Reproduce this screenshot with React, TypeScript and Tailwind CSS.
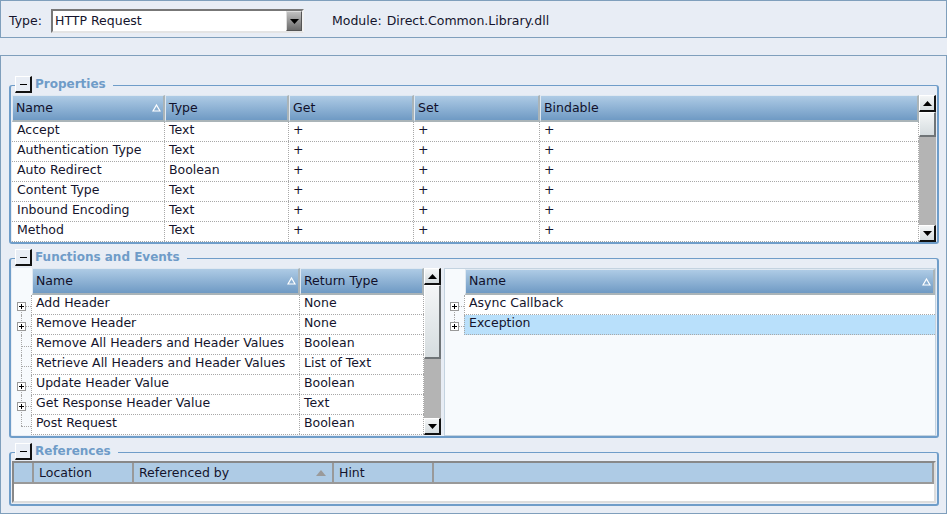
const properties = [
  ["Accept", "Text"],
  ["Authentication Type", "Text"],
  ["Auto Redirect", "Boolean"],
  ["Content Type", "Text"],
  ["Inbound Encoding", "Text"],
  ["Method", "Text"],
];

const functions = [
  { name: "Add Header", type: "None", plus: true },
  { name: "Remove Header", type: "None", plus: true },
  { name: "Remove All Headers and Header Values", type: "Boolean", plus: false },
  { name: "Retrieve All Headers and Header Values", type: "List of Text", plus: false },
  { name: "Update Header Value", type: "Boolean", plus: true },
  { name: "Get Response Header Value", type: "Text", plus: true },
  { name: "Post Request", type: "Boolean", plus: false },
];

const SortUp = () => (
  <svg width="9" height="8" viewBox="0 0 9 8" className="shrink-0">
    <path d="M4.5 1 L8 7 L1 7 Z" fill="none" stroke="#fff" strokeWidth="1.2" />
  </svg>
);

const Header = ({ label, width, sort, height }: { label: string; width?: string; sort?: boolean; height?: string }) => (
  <div
    className={`flex items-center justify-between border-t border-l border-[#dfe8f1] border-b-2 border-b-[#aab4b8] border-r-2 border-r-[#aab4b8] bg-linear-to-b from-[#aecbe5] to-[#6f9ac4] pl-[3px] pr-[2px] text-[#10102a] ${height ?? "h-[27px]"} ${width ?? "flex-1"}`}
  >
    <span>{label}</span>
    {sort && <SortUp />}
  </div>
);

const Cell = ({ children, width }: { children: string; width?: string }) => (
  <div className={`h-full truncate border-r border-dotted border-[#a8a8a8] pl-[4px] leading-[16px] ${width ?? "flex-1"}`}>
    {children}
  </div>
);

const Arrow = ({ down }: { down?: boolean }) => (
  <svg width="9" height="5" viewBox="0 0 9 5">
    <path d={down ? "M0 0 H9 L4.5 5 Z" : "M4.5 0 L9 5 H0 Z"} fill="#000" />
  </svg>
);

const ScrollBar = ({ thumb }: { thumb: string }) => {
  const btn =
    "flex h-[17px] shrink-0 items-center justify-center border-t border-l border-white border-r-2 border-b-2 border-r-[#111] border-b-[#111] bg-linear-to-b from-[#f4f6f7] to-[#d5dcdf]";
  return (
    <div className="flex h-full w-[17px] shrink-0 flex-col bg-[#b4b4b4]">
      <div className={btn}>
        <Arrow />
      </div>
      <div className={`${thumb} shrink-0 border-r-2 border-b-2 border-r-[#6f7477] border-b-[#6f7477] border-t border-l border-white bg-linear-to-b from-[#f4f6f7] to-[#d5dcdf]`} />
      <div className="flex-1" />
      <div className={btn}>
        <Arrow down />
      </div>
    </div>
  );
};

const Collapse = () => (
  <div className="flex h-[17px] w-[17px] items-center justify-center border-t border-l border-white border-r-2 border-b-2 border-r-[#111] border-b-[#111] bg-[#e8edf5]">
    <div className="h-px w-[7px] bg-black" />
  </div>
);

const Group = ({ title, className, children }: { title: string; className: string; children: React.ReactNode }) => (
  <div className={`relative rounded-[3px] border-x-2 border-t border-b-2 border-[#6f9dc9] ${className}`}>
    <div className="absolute top-[-10px] left-[4px] flex h-[17px] items-start gap-[3px] bg-[#e8edf5] pr-[7px]">
      <Collapse />
      <span className="text-[12px] leading-[17px] font-bold text-[#6f9cc8]">{title}</span>
    </div>
    {children}
  </div>
);

const Plus = () => (
  <div className="relative z-10 flex h-[9px] w-[9px] items-center justify-center border border-[#999] bg-white">
    <div className="absolute h-px w-[5px] bg-black" />
    <div className="absolute h-[5px] w-px bg-black" />
  </div>
);

const Tree = ({ plus, last, first }: { plus: boolean; last?: boolean; first?: boolean }) => (
  <div className="relative h-full w-[19px] shrink-0">
    <div className={`absolute left-[9px] border-l border-dotted border-[#a8a8a8] ${first ? "top-[11px] bottom-0" : last ? "top-0 h-[11px]" : "inset-y-0"}`} />
    <div className="absolute top-[11px] left-[9px] w-[10px] border-t border-dotted border-[#a8a8a8]" />
    {plus && (
      <div className="absolute top-[7px] left-[5px]">
        <Plus />
      </div>
    )}
  </div>
);

export default function App() {
  return (
    <div className="flex h-[514px] w-[947px] flex-col overflow-hidden bg-[#e8edf5] font-['DejaVu_Sans',sans-serif] text-[12.5px] text-[#14142c]">
      <div className="flex h-[38px] shrink-0 items-center border border-[#7f9fbc] pt-[4px] pl-[8px]">
        <span className="w-[42px]">Type:</span>
        <div className="flex h-[24px] w-[253px] items-center justify-between border-t-2 border-l-2 border-t-[#777] border-l-[#777] border-r-2 border-b-2 border-r-[#f2f2f2] border-b-[#e4e4e4] bg-white pl-[2px]">
          <span>HTTP Request</span>
          <div className="flex h-[20px] w-[16px] items-center justify-center border-t border-l border-[#ddd] border-r border-b border-r-[#555] border-b-[#555] bg-linear-to-b from-[#c0c0c0] to-[#6c6c6c]">
            <Arrow down />
          </div>
        </div>
        <span className="ml-[28px]">Module:</span>
        <span className="ml-[5px]">Direct.Common.Library.dll</span>
      </div>

      <div className="mt-[17px] flex h-[459px] shrink-0 flex-col border border-[#7f9fbc] pt-[29px] pr-[7px] pl-[8px]">
        <Group title="Properties" className="h-[159px] pt-[9px] pr-px pl-[1px]">
          <div className="flex h-[147px]">
            <div className="min-w-0 flex-1 bg-white">
              <div className="flex">
                <Header label="Name" width="w-[153px]" sort />
                <Header label="Type" width="w-[124px]" />
                <Header label="Get" width="w-[125px]" />
                <Header label="Set" width="w-[126px]" />
                <Header label="Bindable" />
              </div>
              {properties.map(([name, type]) => (
                <div key={name} className="flex h-[20px] border-b border-dotted border-[#a8a8a8] pl-px">
                  <Cell width="w-[152px]">{name}</Cell>
                  <Cell width="w-[124px]">{type}</Cell>
                  <Cell width="w-[125px]">+</Cell>
                  <Cell width="w-[126px]">+</Cell>
                  <Cell>+</Cell>
                </div>
              ))}
            </div>
            <ScrollBar thumb="h-[25px]" />
          </div>
        </Group>

        <Group title="Functions and Events" className="mt-[14px] h-[180px] pt-[9px] pr-px pl-[1px]">
          <div className="flex h-[168px] gap-[3px]">
            <div className="flex h-[167px] w-[429px] shrink-0 bg-[#f7fafd]">
              <div className="min-w-0 flex-1">
                <div className="flex pl-[20px]">
                  <Header label="Name" width="w-[268px]" sort />
                  <Header label="Return Type" />
                </div>
                {functions.map((f, i) => (
                  <div key={f.name} className="flex h-[20px]">
                    <Tree plus={f.plus} first={i === 0} last={i === functions.length - 1} />
                    <div className="flex min-w-0 flex-1 border-b border-l border-dotted border-[#a8a8a8] bg-white">
                      <Cell width="w-[268px]">{f.name}</Cell>
                      <Cell>{f.type}</Cell>
                    </div>
                  </div>
                ))}
              </div>
              <ScrollBar thumb="h-[74px]" />
            </div>
            <div className="min-w-0 flex-1 border border-[#c4d3e0] bg-[#f7fafd]">
              <div className="pl-[20px]">
                <Header label="Name" width="w-full" height="h-[26px]" sort />
              </div>
              <div className="flex h-[20px]">
                <Tree plus first />
                <div className="flex-1 border-b border-l border-dotted border-[#a8a8a8] bg-white pl-[4px] leading-[16px]">Async Callback</div>
              </div>
              <div className="flex h-[20px]">
                <Tree plus last />
                <div className="flex-1 border-b border-l border-dotted border-[#a8a8a8] bg-[#b9e0fb] pl-[4px] leading-[16px]">Exception</div>
              </div>
            </div>
          </div>
        </Group>

        <Group title="References" className="mt-[14px] h-[54px] pt-[8px] pr-px pl-[1px]">
          <div className="h-[42px] border-t-2 border-l-2 border-t-[#888] border-l-[#888] border-r-2 border-b-2 border-r-[#ddd] border-b-[#ddd] bg-white">
            <div className="flex h-[21px] border-r-2 border-b-2 border-[#999] bg-[#aecbe5]">
              <div className="w-[20px] border-r-2 border-[#999]" />
              <div className="w-[100px] border-r-2 border-[#999] pl-[5px] leading-[20px]">Location</div>
              <div className="flex w-[200px] items-center justify-between border-r-2 border-[#999] pr-[6px] pl-[5px]">
                <span className="pt-[2px]">Referenced by</span>
                <svg width="10" height="6" viewBox="0 0 10 6">
                  <path d="M5 0 L10 6 H0 Z" fill="#9a9a9a" />
                </svg>
              </div>
              <div className="w-[100px] border-r-2 border-[#999] pl-[5px] leading-[20px]">Hint</div>
            </div>
          </div>
        </Group>
      </div>
    </div>
  );
}
